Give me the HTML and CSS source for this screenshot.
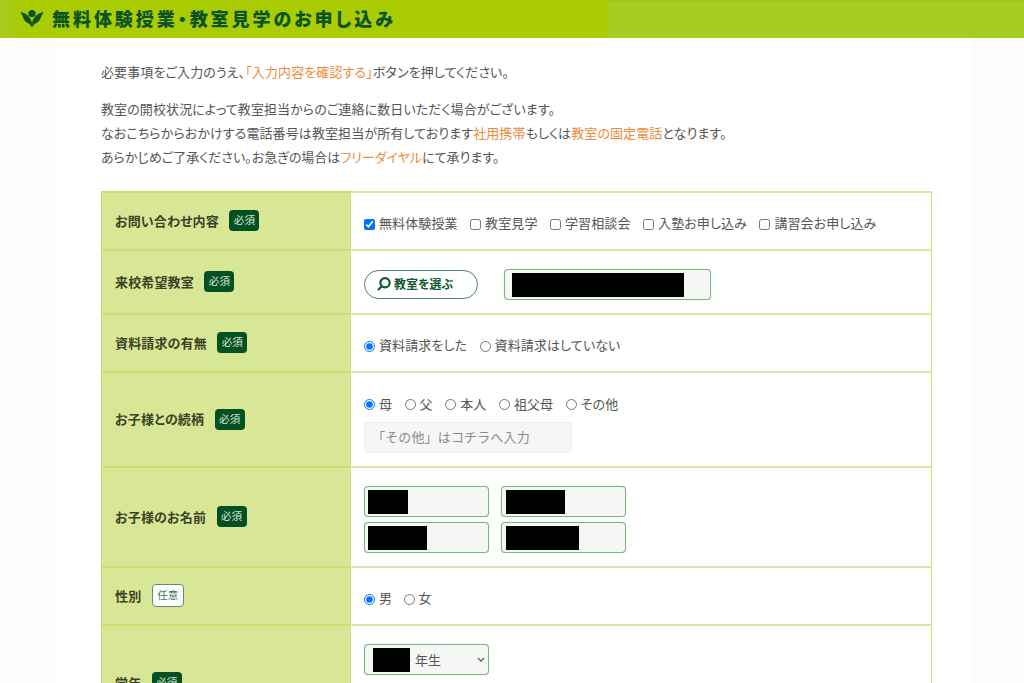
FILE: index.html
```html
<!DOCTYPE html>
<html lang="ja">

<head>
    <meta charset="UTF-8">
    <meta name="viewport" content="width=device-width, initial-scale=1.0">
    <title>無料体験授業・教室見学のお申し込み</title>
    <link rel="stylesheet" href="styles.css">
</head>

<body>
    <header class="header">
        <div class="header-inner">
            <svg class="logo" viewBox="0 0 24 18" width="24" height="18">
                <circle cx="12" cy="4.6" r="3.7" />
                <path d="M0.5 3C6 4 10.8 8 11.6 13V18C10 15.3 8.8 14.6 6.8 13.6C3.6 11.8 3.2 7.5 0.5 3Z" />
                <path d="M23.5 3C18 4 13.2 8 12.4 13V18C14 15.3 15.2 14.6 17.2 13.6C20.4 11.8 20.8 7.5 23.5 3Z" />
                <path d="M11.4 12H12.6V18H11.4Z" />
            </svg>
            <h1>無料体験授業・教室見学のお申し込み</h1>
        </div>
    </header>

    <main class="container">
        <p class="lead">必要事項をご入力のうえ、<em>「入力内容を確認する」</em>ボタンを押してください。</p>
        <p class="note">
            教室の開校状況によって教室担当からのご連絡に数日いただく場合がございます。<br>
            なおこちらからおかけする電話番号は教室担当が所有しております<em>社用携帯</em>もしくは<em>教室の固定電話</em>となります。<br>
            <span class="tight">あらかじめご了承ください。お急ぎの場合は<em>フリーダイヤル</em>にて承ります。</span>
        </p>

        <form class="form">
            <div class="row row-type">
                <div class="th">お問い合わせ内容<span class="badge">必須</span></div>
                <div class="td choices">
                    <label><input type="checkbox" checked>無料体験授業</label>
                    <label><input type="checkbox">教室見学</label>
                    <label><input type="checkbox">学習相談会</label>
                    <label><input type="checkbox">入塾お申し込み</label>
                    <label><input type="checkbox">講習会お申し込み</label>
                </div>
            </div>
            <div class="row row-school">
                <div class="th">来校希望教室<span class="badge">必須</span></div>
                <div class="td">
                    <button type="button" class="select-btn">
                        <svg viewBox="0 0 14 14" width="14" height="14">
                            <circle cx="8" cy="5.8" r="4.6" />
                            <path d="M4.9 9.2L1 13" />
                        </svg>
                        教室を選ぶ
                    </button>
                    <div class="field field-school"><span class="mask"></span></div>
                </div>
            </div>
            <div class="row row-doc">
                <div class="th">資料請求の有無<span class="badge">必須</span></div>
                <div class="td choices">
                    <label><input type="radio" name="doc" checked>資料請求をした</label>
                    <label><input type="radio" name="doc">資料請求はしていない</label>
                </div>
            </div>
            <div class="row row-relation">
                <div class="th">お子様との続柄<span class="badge">必須</span></div>
                <div class="td stack">
                    <div class="choices">
                        <label><input type="radio" name="relation" checked>母</label>
                        <label><input type="radio" name="relation">父</label>
                        <label><input type="radio" name="relation">本人</label>
                        <label><input type="radio" name="relation">祖父母</label>
                        <label><input type="radio" name="relation">その他</label>
                    </div>
                    <input type="text" class="other" placeholder="「その他」はコチラへ入力">
                </div>
            </div>
            <div class="row row-name">
                <div class="th">お子様のお名前<span class="badge">必須</span></div>
                <div class="td names">
                    <div class="field"><span class="mask mask-sei"></span></div>
                    <div class="field"><span class="mask mask-mei"></span></div>
                    <div class="field"><span class="mask mask-sei-kana"></span></div>
                    <div class="field"><span class="mask mask-mei-kana"></span></div>
                </div>
            </div>
            <div class="row row-gender">
                <div class="th">性別<span class="badge optional">任意</span></div>
                <div class="td choices">
                    <label><input type="radio" name="gender" checked>男</label>
                    <label><input type="radio" name="gender">女</label>
                </div>
            </div>
            <div class="row row-grade">
                <div class="th">学年<span class="badge">必須</span></div>
                <div class="td">
                    <div class="field grade">
                        <span class="mask mask-grade"></span>年生
                        <svg viewBox="0 0 8 6" width="8" height="6">
                            <path d="M1 1L4 4.2L7 1" />
                        </svg>
                    </div>
                </div>
            </div>
        </form>
    </main>
</body>

</html>
```
FILE: styles.css
```css
* {
    box-sizing: border-box;
}

body {
    margin: 0;
    height: 683px;
    overflow: hidden;
    background-color: #fcfcfc;
    color: #555;
    font-family: "Noto Sans CJK JP", sans-serif;
    font-size: 13px;
    font-feature-settings: "palt";
    letter-spacing: 0.1px;
}

.header {
    height: 38px;
    background: linear-gradient(#a0c31c, #a8cc1f 4px);
}

.header-inner {
    display: flex;
    align-items: center;
    gap: 8px;
    width: 607px;
    height: 38px;
    padding-left: 20px;
    background: linear-gradient(90deg, #a6cb20, #aacc03 22px);
}

.logo {
    fill: #0b5424;
    margin-top: -2px;
}

h1 {
    margin: 0;
    color: #0b5424;
    font-size: 18px;
    font-weight: 900;
    line-height: 36px;
    letter-spacing: 2.95px;
    white-space: nowrap;
    padding-bottom: 2px;
}

.container {
    width: 916px;
    height: 645px;
    margin-left: 57px;
    padding: 22px 41px 0 44px;
    background-color: #fff;
}

p {
    margin: 0;
    line-height: 24px;
    white-space: nowrap;
}

em {
    color: #ec8a3c;
    font-style: normal;
}

.note {
    margin-top: 13px;
}

.tight {
    letter-spacing: 0;
}

.form {
    width: 831px;
    margin-top: 22px;
    border-left: 1px solid #c9df6b;
    border-right: 1px solid #c9df6b;
}

.row {
    display: grid;
    grid-template-columns: 249px 1fr;
}

.th,
.td {
    display: flex;
    align-items: center;
}

.th {
    padding: 0 0 2px 13px;
    background-color: #d8e795;
    border-top: 2px solid #c9df70;
    border-right: 1px solid #cfe17c;
    color: #3c4226;
    font-weight: 700;
    letter-spacing: 0.15px;
}

.td {
    padding-left: 13px;
    border-top: 2px solid #dbe7a4;
}

.row-type {
    height: 58px;
}

.row-school {
    height: 64px;
}

.row-doc {
    height: 58px;
}

.row-relation {
    height: 95px;
}

.row-name {
    height: 100px;
}

.row-gender {
    height: 58px;
}

.row-grade {
    height: 116px;
}

.badge {
    width: 30px;
    height: 21px;
    margin: 1px 0 0 10.5px;
    border-radius: 4px;
    background-color: #045023;
    color: #d7e8d5;
    font-size: 10.5px;
    font-weight: 400;
    line-height: 20px;
    text-align: center;
}

.badge.optional {
    width: 32px;
    height: 23px;
    border: 1px solid #5d8f78;
    background-color: #fff;
    color: #3c735a;
}

.choices {
    gap: 12.5px;
}

.td.choices {
    padding-top: 3px;
}

.row-gender .choices {
    gap: 11.5px;
}

label {
    display: flex;
    align-items: center;
    white-space: nowrap;
}

label input {
    width: 11px;
    height: 11px;
    margin: 3px 4px 0 0;
}

.field {
    display: flex;
    align-items: center;
    width: 125px;
    height: 31px;
    border: 1px solid #7eb57d;
    border-radius: 4px;
    background-color: #f6f6f6;
    box-shadow: 0 0 1px #8fca8f;
}

.mask {
    height: 24px;
    background-color: #000;
}

.select-btn {
    display: flex;
    align-items: center;
    gap: 3px;
    width: 114px;
    height: 29px;
    margin-top: 4px;
    padding: 0 0 1px 12px;
    border: 1px solid #4f8069;
    border-radius: 15px;
    background-color: #fff;
    color: #0f5a30;
    font-family: inherit;
    font-size: 12px;
    font-weight: 700;
    font-feature-settings: inherit;
    white-space: nowrap;
}

.select-btn svg {
    fill: none;
    stroke: #0f5a30;
    stroke-width: 2.2;
}

.field-school {
    width: 207px;
    margin: 5px 0 0 26px;
    padding-left: 7px;
}

.field-school .mask {
    width: 172px;
}

.stack {
    flex-direction: column;
    align-items: flex-start;
    padding-top: 20px;
}

.stack .choices {
    display: flex;
    height: 20px;
}

.other {
    width: 208px;
    height: 31px;
    margin-top: 9px;
    padding: 0 7px 3px;
    border: 1px solid #ececec;
    border-radius: 4px;
    background-color: #f6f6f6;
    font-family: inherit;
    font-size: 13px;
    letter-spacing: 0.15px;
}

.other::placeholder {
    color: #8a8a8a;
}

.names {
    display: grid;
    grid-template-columns: 125px 125px;
    align-content: center;
    gap: 5px 12px;
    padding-top: 5px;
}

.names .field {
    padding-left: 3px;
}

.names .field:nth-child(even) {
    padding-left: 4px;
}

.mask-sei {
    width: 40px;
}

.mask-mei {
    width: 59px;
}

.mask-sei-kana {
    width: 59px;
}

.mask-mei-kana {
    width: 73px;
}

.row-grade .td {
    align-items: flex-start;
    padding-top: 18px;
}

.grade {
    padding: 0 3px 0 8px;
}

.mask-grade {
    width: 37px;
    margin-right: 5px;
}

.grade svg {
    margin-left: auto;
    fill: none;
    stroke: #555;
    stroke-width: 1.2;
}
```
